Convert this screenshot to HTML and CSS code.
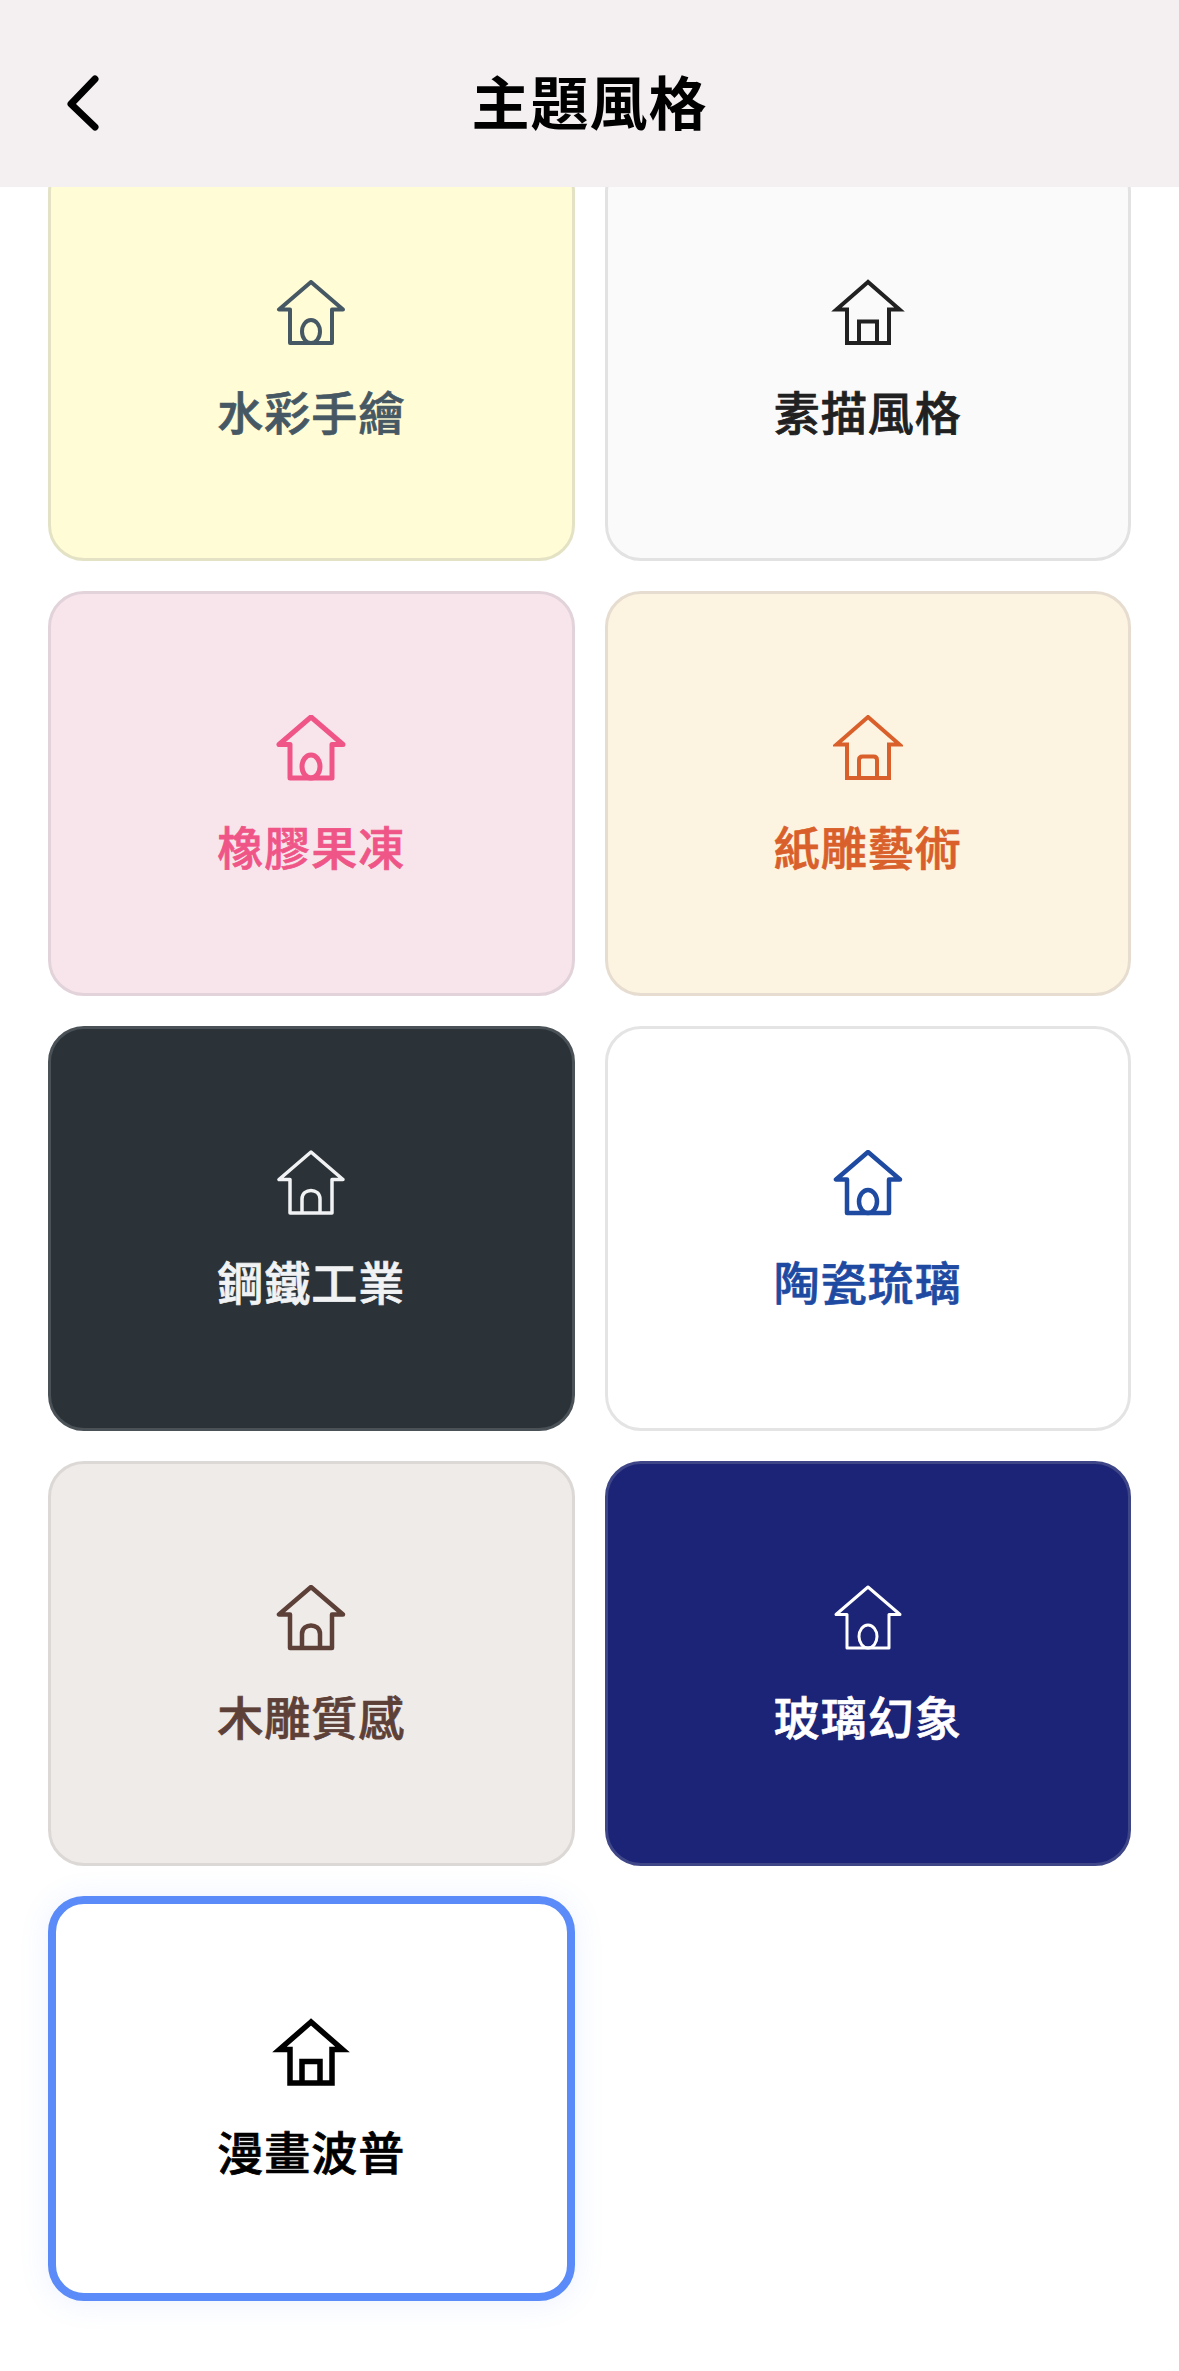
FILE: index.html
```html
<!DOCTYPE html>
<html lang="zh-Hant">
<head>
<meta charset="UTF-8" />
<meta name="viewport" content="width=device-width, initial-scale=1" />
<title>主題風格</title>
<link rel="stylesheet" href="styles.css">
</head>
<body>

<svg class="defs" width="0" height="0" aria-hidden="true">
  <!-- same house, the door and the corners change per theme -->
  <symbol id="houseOval" viewBox="0 0 70 66">
    <path d="M35 2 L3 29.500 H14 V63 H56 V29.500 H67 Z" />
    <ellipse cx="35" cy="51.500" rx="9" ry="11.500" />
  </symbol>
  <symbol id="houseArch" viewBox="0 0 70 66">
    <path d="M35 2 L3 29.500 H14 V63 H56 V29.500 H67 Z" />
    <path d="M26 63 V49 C26 37.500 44 37.500 44 49 V63" />
  </symbol>
  <symbol id="houseSquare" viewBox="0 0 70 66" overflow="visible">
    <path stroke-linejoin="miter" stroke-miterlimit="8" d="M35 2 L3.500 29.500 H14 V63 H56 V29.500 H66.500 Z" />
    <path stroke-linejoin="miter" d="M26 63 V41.500 H44 V63" />
  </symbol>
  <symbol id="houseSoftDoor" viewBox="0 0 70 66">
    <path stroke-linejoin="miter" stroke-miterlimit="8" d="M35 2 L3.500 29.500 H14 V63 H56 V29.500 H66.500 Z" />
    <path d="M26 63 V45 Q26 41.500 29.500 41.500 H40.500 Q44 41.500 44 45 V63" />
  </symbol>
</svg>

<header class="topbar">
  <svg class="back" viewBox="0 0 34 56" width="34" height="56" aria-label="返回">
    <path d="M29 4 L5 29 L29 52" />
  </svg>
  <h1>主題風格</h1>
</header>

<main class="scroller">
  <div class="grid">
    <button class="card watercolor"><svg class="house"><use href="#houseOval" /></svg><span>水彩手繪</span></button>
    <button class="card sketch"><svg class="house"><use href="#houseSquare" /></svg><span>素描風格</span></button>
    <button class="card jelly"><svg class="house"><use href="#houseOval" /></svg><span>橡膠果凍</span></button>
    <button class="card paper"><svg class="house"><use href="#houseSoftDoor" /></svg><span>紙雕藝術</span></button>
    <button class="card steel"><svg class="house"><use href="#houseArch" /></svg><span>鋼鐵工業</span></button>
    <button class="card ceramic"><svg class="house"><use href="#houseOval" /></svg><span>陶瓷琉璃</span></button>
    <button class="card wood"><svg class="house"><use href="#houseArch" /></svg><span>木雕質感</span></button>
    <button class="card glass"><svg class="house"><use href="#houseOval" /></svg><span>玻璃幻象</span></button>
    <button class="card comic selected"><svg class="house"><use href="#houseSquare" /></svg><span>漫畫波普</span></button>
  </div>
</main>

</body>
</html>
```

FILE: styles.css
```css
* {
  box-sizing: border-box;
}
html, body {
  margin: 0;
  height: 100%;
}
body {
  display: flex;
  flex-direction: column;
  background-color: #ffffff;
  font-family: "Noto Sans CJK TC", "Noto Sans", sans-serif;
  overflow: hidden;
}
.defs {
  position: absolute;
}
.topbar {
  position: relative;
  flex: none;
  height: 187px;
  display: flex;
  align-items: center;
  justify-content: center;
  background-color: #f4f0f2;
}
.topbar h1 {
  margin: 0;
  padding-top: 14px;
  font-size: 58px;
  font-weight: 700;
  letter-spacing: 1px;
  line-height: 1.2;
  color: #000000;
}
.back {
  position: absolute;
  left: 66px;
  top: 75px;
  fill: none;
  stroke: #000000;
  stroke-width: 7;
  stroke-linecap: round;
  stroke-linejoin: round;
}
.scroller {
  flex: 1;
  overflow: hidden;
}
.grid {
  display: grid;
  grid-template-columns: 1fr 1fr;
  grid-auto-rows: 405px;
  gap: 30px;
  margin-top: -31px;
  padding: 0 48px;
}
.card {
  display: flex;
  flex-direction: column;
  align-items: center;
  justify-content: center;
  gap: 37px;
  padding: 2px 0 0;
  border: 3px solid;
  border-radius: 36px;
  font: inherit;
  font-size: 46px;
  font-weight: 500;
  letter-spacing: 1px;
  -webkit-text-stroke: 0.7px currentColor;
}
.card span {
  line-height: 1.2;
}
.house {
  width: 70px;
  height: 66px;
  fill: none;
  stroke: currentColor;
  stroke-width: 4;
  stroke-linejoin: round;
  overflow: visible;
}
.watercolor {
  background-color: #fffcd6;
  border-color: #e3e2c4;
  color: #465863;
}
.sketch {
  background-color: #fafafa;
  border-color: #e2e2e2;
  color: #212121;
}
.jelly {
  background-color: #f8e5ec;
  border-color: #e2d2d9;
  color: #ef5587;
}
.jelly .house {
  stroke-width: 5;
}
.paper {
  background-color: #fdf3e1;
  border-color: #e6ddd0;
  color: #d9602a;
}
.steel {
  background-color: #2b3338;
  border-color: #4a5257;
  color: #f1f2f3;
}
.steel .house {
  stroke-width: 3.5;
}
.ceramic {
  background-color: #ffffff;
  border-color: #e4e4e4;
  color: #1e4aa2;
}
.ceramic .house {
  stroke-width: 4.5;
}
.wood {
  background-color: #efebe9;
  border-color: #dcd8d6;
  color: #5d4037;
}
.wood .house {
  stroke-width: 4.5;
}
.glass {
  background-color: #1c2477;
  border-color: #3f4688;
  color: #ffffff;
}
.glass .house {
  stroke-width: 3;
}
.comic {
  background-color: #ffffff;
  color: #000000;
}
.comic .house {
  stroke-width: 5.5;
}
.selected {
  border: 8px solid #5a8bf8;
  box-shadow: 0 2px 30px rgba(90, 139, 248, 0.12);
}
```
